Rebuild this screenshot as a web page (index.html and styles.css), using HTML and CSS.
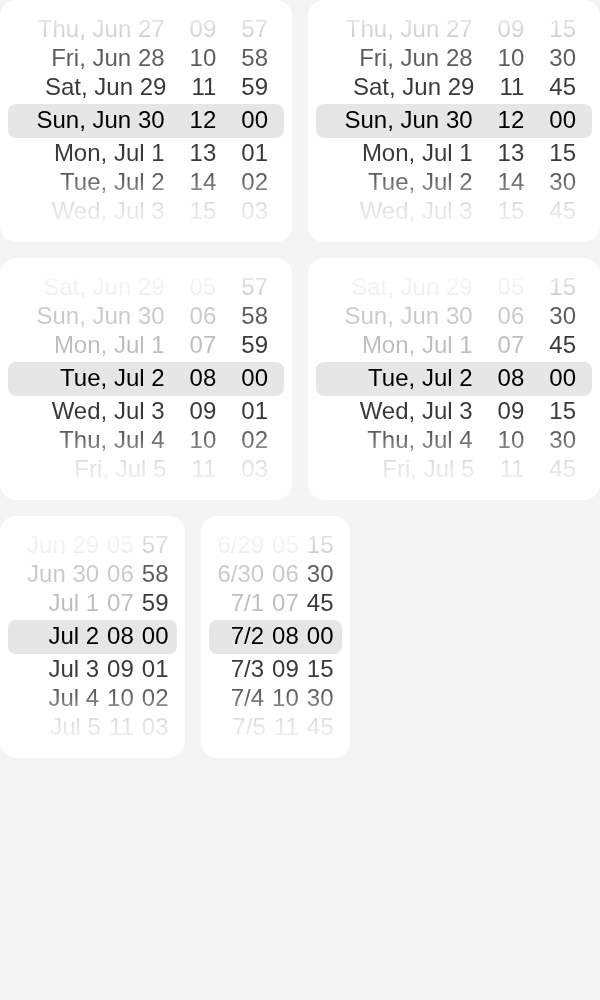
FILE: index.html
```html
<!DOCTYPE html>
<html>
<head>
<meta charset="utf-8">
<link rel="stylesheet" href="styles.css">
</head>
<body>
<div class="page">
  <div class="card wide">
    <div class="wheel">
      <div class="row d3"><span>Thu, Jun 27</span><span>09</span><span>57</span></div>
      <div class="row d2"><span>Fri, Jun 28</span><span>10</span><span>58</span></div>
      <div class="row d1"><span>Sat, Jun 29</span><span>11</span><span>59</span></div>
      <div class="row sel"><span>Sun, Jun 30</span><span>12</span><span>00</span></div>
      <div class="row d1"><span>Mon, Jul 1</span><span>13</span><span>01</span></div>
      <div class="row d2"><span>Tue, Jul 2</span><span>14</span><span>02</span></div>
      <div class="row d3"><span>Wed, Jul 3</span><span>15</span><span>03</span></div>
    </div>
  </div>
  <div class="card wide">
    <div class="wheel">
      <div class="row d3"><span>Thu, Jun 27</span><span>09</span><span>15</span></div>
      <div class="row d2"><span>Fri, Jun 28</span><span>10</span><span>30</span></div>
      <div class="row d1"><span>Sat, Jun 29</span><span>11</span><span>45</span></div>
      <div class="row sel"><span>Sun, Jun 30</span><span>12</span><span>00</span></div>
      <div class="row d1"><span>Mon, Jul 1</span><span>13</span><span>15</span></div>
      <div class="row d2"><span>Tue, Jul 2</span><span>14</span><span>30</span></div>
      <div class="row d3"><span>Wed, Jul 3</span><span>15</span><span>45</span></div>
    </div>
  </div>
  <div class="card wide">
    <div class="wheel">
      <div class="row d3"><span class="dis">Sat, Jun 29</span><span class="dis">05</span><span>57</span></div>
      <div class="row d2"><span class="dis">Sun, Jun 30</span><span class="dis">06</span><span>58</span></div>
      <div class="row d1"><span class="dis">Mon, Jul 1</span><span class="dis">07</span><span>59</span></div>
      <div class="row sel"><span>Tue, Jul 2</span><span>08</span><span>00</span></div>
      <div class="row d1"><span>Wed, Jul 3</span><span>09</span><span>01</span></div>
      <div class="row d2"><span>Thu, Jul 4</span><span>10</span><span>02</span></div>
      <div class="row d3"><span>Fri, Jul 5</span><span>11</span><span>03</span></div>
    </div>
  </div>
  <div class="card wide">
    <div class="wheel">
      <div class="row d3"><span class="dis">Sat, Jun 29</span><span class="dis">05</span><span>15</span></div>
      <div class="row d2"><span class="dis">Sun, Jun 30</span><span class="dis">06</span><span>30</span></div>
      <div class="row d1"><span class="dis">Mon, Jul 1</span><span class="dis">07</span><span>45</span></div>
      <div class="row sel"><span>Tue, Jul 2</span><span>08</span><span>00</span></div>
      <div class="row d1"><span>Wed, Jul 3</span><span>09</span><span>15</span></div>
      <div class="row d2"><span>Thu, Jul 4</span><span>10</span><span>30</span></div>
      <div class="row d3"><span>Fri, Jul 5</span><span>11</span><span>45</span></div>
    </div>
  </div>
  <div class="card compact c5">
    <div class="wheel">
      <div class="row d3"><span class="dis">Jun 29</span><span class="dis">05</span><span>57</span></div>
      <div class="row d2"><span class="dis">Jun 30</span><span class="dis">06</span><span>58</span></div>
      <div class="row d1"><span class="dis">Jul 1</span><span class="dis">07</span><span>59</span></div>
      <div class="row sel"><span>Jul 2</span><span>08</span><span>00</span></div>
      <div class="row d1"><span>Jul 3</span><span>09</span><span>01</span></div>
      <div class="row d2"><span>Jul 4</span><span>10</span><span>02</span></div>
      <div class="row d3"><span>Jul 5</span><span>11</span><span>03</span></div>
    </div>
  </div>
  <div class="card compact c6">
    <div class="wheel">
      <div class="row d3"><span class="dis">6/29</span><span class="dis">05</span><span>15</span></div>
      <div class="row d2"><span class="dis">6/30</span><span class="dis">06</span><span>30</span></div>
      <div class="row d1"><span class="dis">7/1</span><span class="dis">07</span><span>45</span></div>
      <div class="row sel"><span>7/2</span><span>08</span><span>00</span></div>
      <div class="row d1"><span>7/3</span><span>09</span><span>15</span></div>
      <div class="row d2"><span>7/4</span><span>10</span><span>30</span></div>
      <div class="row d3"><span>7/5</span><span>11</span><span>45</span></div>
    </div>
  </div>
</div>
</body>
</html>
```
FILE: styles.css
```css
body {
  margin: 0;
  background: #f4f4f4;
  font-family: "Liberation Sans", Arial, sans-serif;
  font-size: 24px;
  color: #000;
}
.page {
  display: flex;
  flex-wrap: wrap;
  gap: 16px;
}
.card {
  background: #fff;
  border-radius: 16px;
  height: 242px;
}
.wide { width: 292px; }
.c5 { width: 185px; }
.c6 { width: 149px; }
.wheel {
  padding-top: 14px;
  -webkit-mask-image: linear-gradient(to bottom, transparent 12px, rgba(0,0,0,.25) 20px, rgba(0,0,0,.45) 36px, #000 48px, #000 178px, rgba(0,0,0,.6) 196px, rgba(0,0,0,.33) 202px, rgba(0,0,0,.15) 222px, transparent 232px);
  mask-image: linear-gradient(to bottom, transparent 12px, rgba(0,0,0,.25) 20px, rgba(0,0,0,.45) 36px, #000 48px, #000 178px, rgba(0,0,0,.6) 196px, rgba(0,0,0,.33) 202px, rgba(0,0,0,.15) 222px, transparent 232px);
}
.row {
  display: grid;
  align-items: center;
  height: 29px;
  margin: 0 8px;
  white-space: nowrap;
}
.wide .row {
  grid-template-columns: 1fr auto auto;
  column-gap: 25px;
  padding-right: 16px;
}
.wide .row span:first-child { text-align: right; }
.compact .row {
  grid-template-columns: auto auto auto;
  justify-content: end;
  column-gap: 8px;
  padding-right: 8.5px;
}
.row.sel {
  height: 34px;
  margin-top: 3px;
  padding-bottom: 2px;
  box-sizing: border-box;
  background: #e6e6e6;
  border-radius: 8px;
}
.d1 { color: rgba(0,0,0,.78); }
.d2 { color: rgba(0,0,0,.64); }
.d3 { color: rgba(0,0,0,.42); }
.dis { opacity: .33; }
```
